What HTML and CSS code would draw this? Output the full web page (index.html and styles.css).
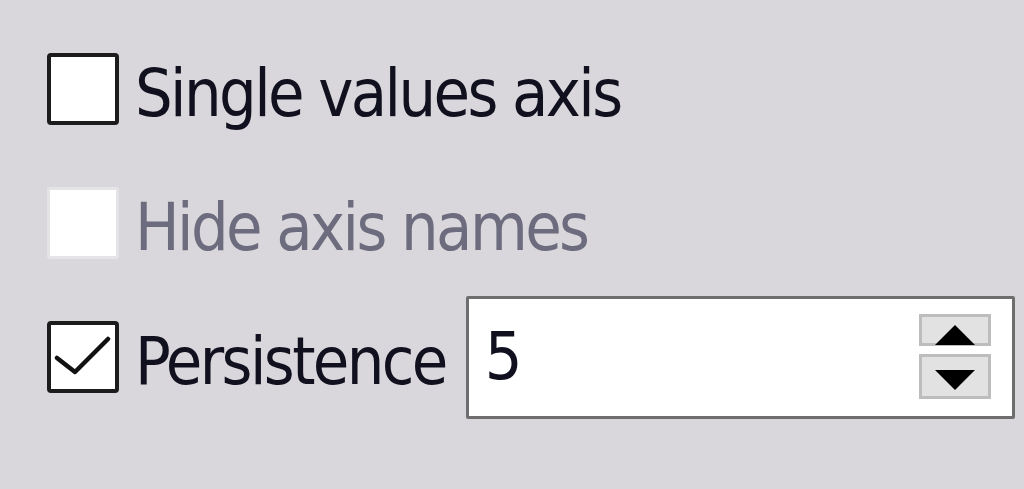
FILE: index.html
```html
<!DOCTYPE html>
<html lang="en">

<head>
  <meta charset="UTF-8">
  <meta name="viewport" content="width=device-width, initial-scale=1.0">
  <title>Axis options</title>
  <link rel="stylesheet" href="styles.css">
</head>

<body>
  <div class="panel">
    <div class="row">
      <span class="box"></span>
      <span class="label">Single values axis</span>
    </div>
    <div class="row">
      <span class="box disabled"></span>
      <span class="label muted">Hide axis names</span>
    </div>
    <div class="row">
      <span class="box">
        <svg class="tick" viewBox="0 0 64 64" width="64" height="64">
          <polyline points="10,37 28,51 61,18" fill="none" stroke="#111" stroke-width="4.5" stroke-linejoin="round" stroke-linecap="round" />
        </svg>
      </span>
      <span class="label">Persistence</span>
      <div class="spinbox">
        <span class="value">5</span>
        <div class="spin">
          <div class="spinBtn up"><span class="arrow"></span></div>
          <div class="spinBtn down"><span class="arrow"></span></div>
        </div>
      </div>
    </div>
  </div>
</body>

</html>
```

FILE: styles.css
```css
html,
body {
  margin: 0;
  height: 100%;
  background: #d9d7db;
}
body {
  font-family: "DejaVu Sans Condensed", "DejaVu Sans", sans-serif;
  font-size: 66px;
  letter-spacing: -2.6px;
  color: #10101e;
  overflow: hidden;
}
.panel {
  display: flex;
  flex-direction: column;
  padding: 22px 0 0 47px;
}
.row {
  display: flex;
  align-items: center;
  height: 134px;
}
.box {
  position: relative;
  box-sizing: border-box;
  width: 72px;
  height: 72px;
  border: 4px solid #1c1c1c;
  border-radius: 4px;
  background: #fff;
  flex-shrink: 0;
}
.box.disabled {
  border: 3px solid #e4e3e6;
  border-radius: 3px;
}
.tick {
  position: absolute;
  top: -4px;
  left: -4px;
}
.label {
  margin-left: 16px;
  line-height: 1;
  padding-top: 10px;
  white-space: nowrap;
}
.muted {
  color: #6c6c7e;
}
.spinbox {
  box-sizing: border-box;
  display: flex;
  justify-content: space-between;
  flex-shrink: 0;
  width: 549px;
  height: 123px;
  margin-left: 20px;
  border: 3px solid #6e6e6e;
  border-radius: 2px;
  background: #fff;
}
.value {
  margin: 25px 0 0 16px;
  line-height: 1;
}
.spin {
  display: flex;
  flex-direction: column;
  gap: 8px;
  margin: 15px 21px 0 0;
}
.spinBtn {
  box-sizing: border-box;
  position: relative;
  width: 72px;
  border: 3px solid #bdbdbd;
  background: #e2e2e2;
}
.spinBtn.up {
  height: 32px;
}
.spinBtn.down {
  height: 45px;
}
.arrow {
  position: absolute;
  left: 13px;
  width: 0;
  height: 0;
  border-left: 20px solid transparent;
  border-right: 20px solid transparent;
}
.up .arrow {
  bottom: -2px;
  border-bottom: 20px solid #000;
}
.down .arrow {
  top: 13px;
  border-top: 20px solid #000;
}
```
